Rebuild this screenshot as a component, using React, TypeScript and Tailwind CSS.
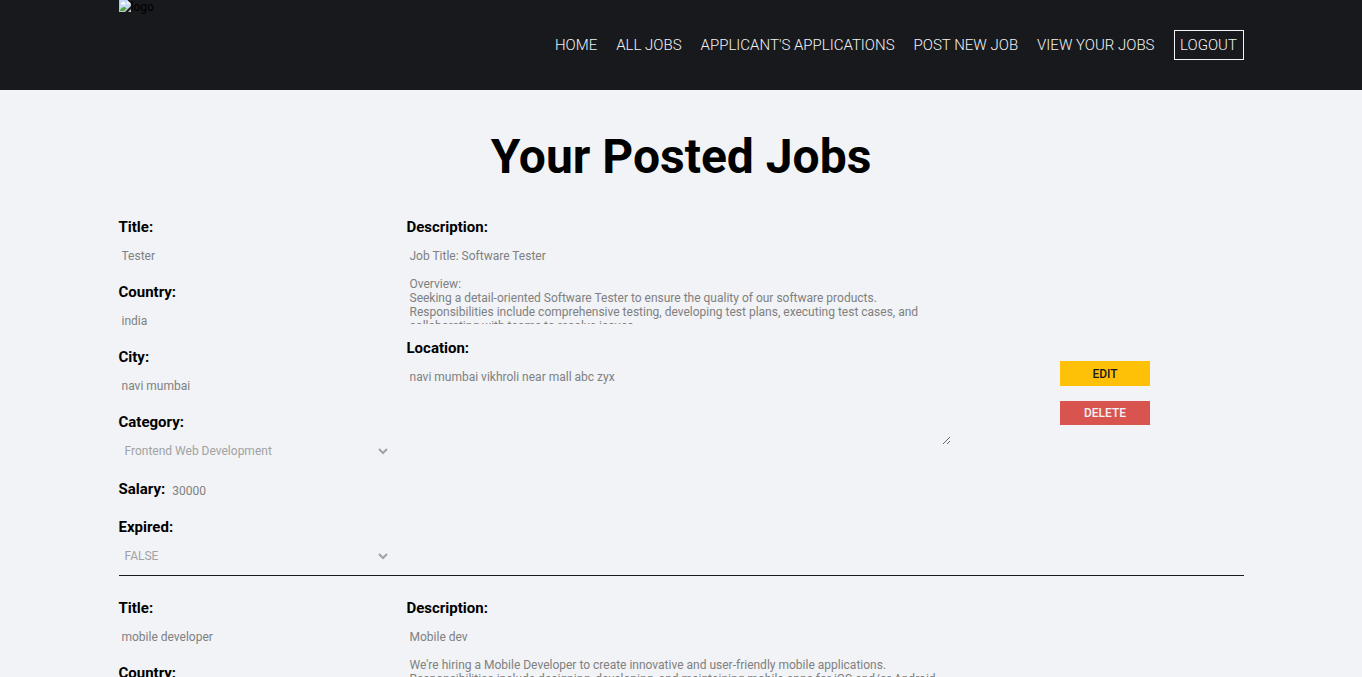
import { useId } from "react";

type Job = {
  title: string;
  country: string;
  city: string;
  category: string;
  salary: string;
  expired: string;
  description: string;
  location: string;
};

const jobs: Job[] = [
  {
    title: "Tester",
    country: "india",
    city: "navi mumbai",
    category: "Frontend Web Development",
    salary: "30000",
    expired: "FALSE",
    description:
      "Job Title: Software Tester\n\nOverview:\nSeeking a detail-oriented Software Tester to ensure the quality of our software products. Responsibilities include comprehensive testing, developing test plans, executing test cases, and collaborating with teams to resolve issues.",
    location: "navi mumbai vikhroli near mall abc zyx",
  },
  {
    title: "mobile developer",
    country: "india",
    city: "navi mumbai",
    category: "Mobile App Development",
    salary: "30000",
    expired: "FALSE",
    description:
      "Mobile dev\n\nWe're hiring a Mobile Developer to create innovative and user-friendly mobile applications. Responsibilities include designing, developing, and maintaining mobile apps for iOS and/or Android platforms.",
    location: "navi mumbai vikhroli near mall abc zyx",
  },
];

const links = ["HOME", "ALL JOBS", "APPLICANT'S APPLICATIONS", "POST NEW JOB", "VIEW YOUR JOBS"];

const labelClass = "text-[15px] leading-[18px] font-bold text-black";

function BrokenImage() {
  return (
    <svg width="12" height="12" viewBox="0 0 12 12" aria-hidden="true">
      <path d="M0 0H8L12 4V12H0Z" fill="#c3c3c3" />
      <path d="M1 0H8V4H11V6L6 11H1Z" fill="#c4d7f5" />
      <path d="M2 3.4a1 1 0 0 1 1-1 1.3 1.3 0 0 1 2.400.3A.9.9 0 0 1 6 4.400H2.400Z" fill="#fff" />
      <path d="M1 11V10C3 6.500 6 6 7.500 8.500L5 11Z" fill="#4fa63c" />
      <path d="M8 0L12 4H8Z" fill="#f3f3f3" />
      <path d="M6 12L12 6V9L9 12Z" fill="#18191c" />
    </svg>
  );
}

function TextField({ label, value }: { label: string; value: string }) {
  const id = useId();
  return (
    <div className="flex flex-col gap-2.5">
      <label htmlFor={id} className={labelClass}>{label}</label>
      <input id={id} disabled defaultValue={value} className="h-5 w-full px-[3px] text-xs text-[#808080]" />
    </div>
  );
}

function SelectField({ label, value }: { label: string; value: string }) {
  const id = useId();
  return (
    <div className="flex flex-col gap-2.5">
      <label htmlFor={id} className={labelClass}>{label}</label>
      <select id={id} disabled defaultValue={value} className="h-5 w-full px-[2px] text-xs text-[#808080] opacity-70">
        <option value={value}>{value}</option>
      </select>
    </div>
  );
}

function AreaField({ label, value, resizable }: { label: string; value: string; resizable?: boolean }) {
  const id = useId();
  return (
    <div className="flex flex-col gap-2.5">
      <label htmlFor={id} className={labelClass}>{label}</label>
      <textarea
        id={id}
        disabled
        defaultValue={value}
        className={`h-[78px] w-full overflow-hidden p-[3px] text-xs leading-[14px] text-[#808080] ${resizable ? "resize" : "resize-none"}`}
      />
    </div>
  );
}

function JobCard({ job }: { job: Job }) {
  const salaryId = useId();
  return (
    <li className="grid grid-cols-[272fr_544fr_277fr] gap-4 border-b border-[#18191c] pb-[9px]">
      <div className="flex flex-col gap-[17px]">
        <TextField label="Title:" value={job.title} />
        <TextField label="Country:" value={job.country} />
        <TextField label="City:" value={job.city} />
        <SelectField label="Category:" value={job.category} />
        <div className="flex h-[23px] items-start gap-1 pt-[2px]">
          <label htmlFor={salaryId} className={labelClass}>Salary:</label>
          <input id={salaryId} disabled defaultValue={job.salary} className="h-[21px] min-w-0 flex-1 px-[3px] text-xs text-[#808080]" />
        </div>
        <SelectField label="Expired:" value={job.expired} />
      </div>
      <div className="flex flex-col gap-[15px]">
        <AreaField label="Description:" value={job.description} />
        <AreaField label="Location:" value={job.location} resizable />
      </div>
      <div className="flex flex-col items-center justify-center gap-[15px] pt-[2px]">
        <button className="h-[25px] w-[90px] bg-[#ffc107] text-xs font-medium text-[#18191c]">EDIT</button>
        <button className="h-6 w-[90px] bg-[#d9534f] text-xs font-medium text-[#f1f3f6]">DELETE</button>
      </div>
    </li>
  );
}

export default function App() {
  return (
    <div className="min-h-screen bg-[#f1f3f6] font-[Roboto,sans-serif] text-black">
      <header className="bg-[#18191c]">
        <div className="mx-auto flex h-[90px] max-w-[1125px] justify-between">
          <a href="#" className="flex h-[14px] items-center text-xs">
            <span className="flex h-full items-start">
              <BrokenImage />
            </span>
            logo
          </a>
          <nav className="flex items-center gap-[19px] text-[15px] font-light text-[#f1f3f6]">
            {links.map((link) => (
              <a key={link} href="#">{link}</a>
            ))}
            <button className="h-[30px] w-[70px] border border-[#f1f3f6] font-light">LOGOUT</button>
          </nav>
        </div>
      </header>
      <main className="mx-auto max-w-[1125px] pt-[39px]">
        <h1 className="text-center text-5xl leading-[56px] font-bold">Your Posted Jobs</h1>
        <ul className="flex flex-col gap-[23px] pt-[33px]">
          {jobs.map((job) => (
            <JobCard key={job.title} job={job} />
          ))}
        </ul>
      </main>
    </div>
  );
}
